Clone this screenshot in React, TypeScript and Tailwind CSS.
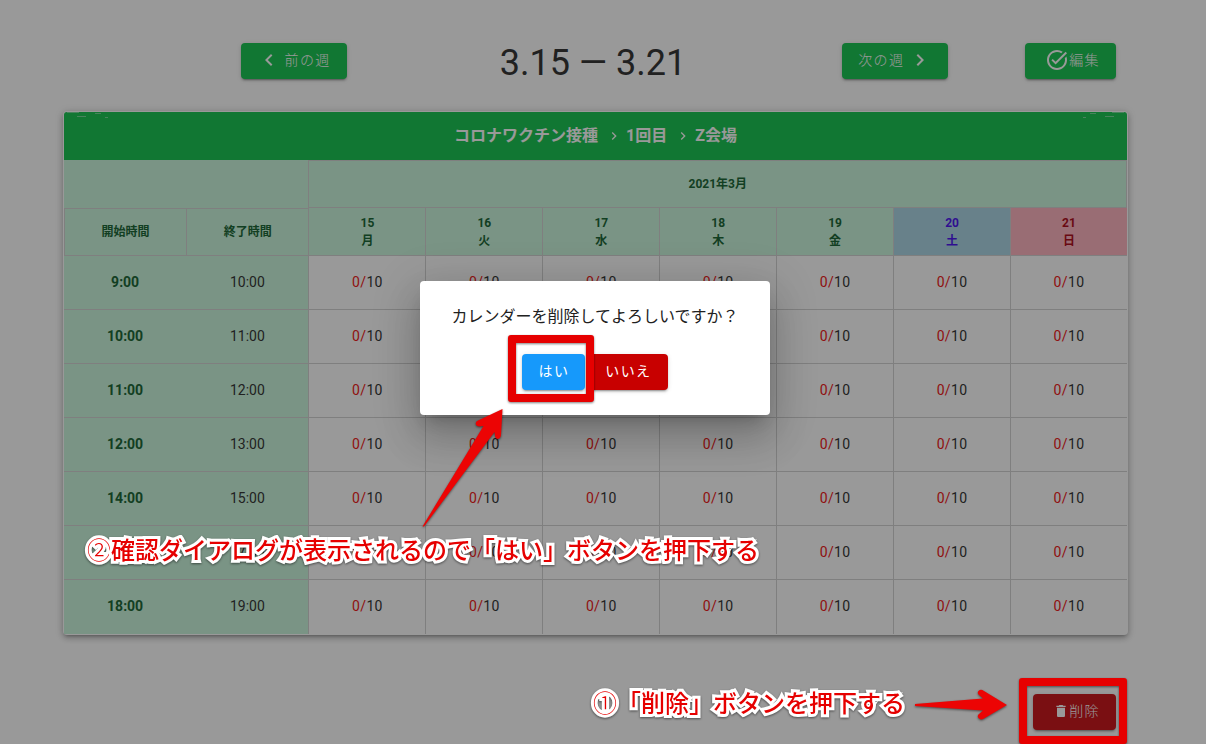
import type { ReactNode } from "react";
import { MdChevronLeft, MdChevronRight, MdDelete, MdTaskAlt } from "react-icons/md";

const days = [
  { date: 15, name: "月", tone: "bg-[#cbf7de] text-[#1e6939]" },
  { date: 16, name: "火", tone: "bg-[#cbf7de] text-[#1e6939]" },
  { date: 17, name: "水", tone: "bg-[#cbf7de] text-[#1e6939]" },
  { date: 18, name: "木", tone: "bg-[#cbf7de] text-[#1e6939]" },
  { date: 19, name: "金", tone: "bg-[#cbf7de] text-[#1e6939]" },
  { date: 20, name: "土", tone: "bg-[#add8e6] text-[#5018f0]" },
  { date: 21, name: "日", tone: "bg-[#ffb6c1] text-[#b01020]" },
];

const slots = [
  ["9:00", "10:00"],
  ["10:00", "11:00"],
  ["11:00", "12:00"],
  ["12:00", "13:00"],
  ["14:00", "15:00"],
  ["16:00", "17:00"],
  ["18:00", "19:00"],
];

function ActionButton({ tone, children }: { tone: string; children: ReactNode }) {
  return (
    <button
      type="button"
      className={`flex h-9 items-center rounded pb-0.5 text-sm tracking-widest whitespace-nowrap text-white shadow-[0_3px_1px_-2px_rgba(0,0,0,0.2),0_2px_2px_rgba(0,0,0,0.14),0_1px_5px_rgba(0,0,0,0.12)] ${tone}`}
    >
      {children}
    </button>
  );
}

function WeekNavigation() {
  return (
    <header className="grid grid-cols-[minmax(0,301fr)_minmax(0,297fr)_minmax(0,307fr)_minmax(0,67fr)] items-center justify-items-center pr-3 pl-20">
      <ActionButton tone="gap-1 bg-[#1dc655] px-4 font-light">
        <MdChevronLeft size={24} aria-hidden />
        前の週
      </ActionButton>
      <h1 className="h-8 text-4xl leading-9 whitespace-nowrap text-[#383838]">3.15 ― 3.21</h1>
      <ActionButton tone="gap-1 bg-[#1dc655] px-4 font-light">
        次の週
        <MdChevronRight size={24} aria-hidden />
      </ActionButton>
      <div className="justify-self-end">
        <ActionButton tone="bg-[#1dc655] pl-5 pr-4 font-light">
          <MdTaskAlt size={24} aria-hidden />
          編集
        </ActionButton>
      </div>
    </header>
  );
}

function Calendar() {
  return (
    <section className="mt-8 rounded bg-white p-px shadow-[0_3px_3px_-2px_rgba(0,0,0,0.2),0_3px_6px_rgba(0,0,0,0.2),0_1px_8px_rgba(0,0,0,0.16)]">
      <div className="relative flex h-12 items-center justify-center rounded-t-[3px] bg-[#1dc655] font-bold text-white">
        <svg className="absolute top-0 left-0" width="60" height="8" viewBox="0 0 60 8" stroke="white" strokeOpacity="0.4" aria-hidden>
          <path d="M3 0.5H15M13 4.5H22M31 1.5H37M41 5.5H44" />
        </svg>
        <svg className="absolute top-0 right-0" width="60" height="8" viewBox="0 0 60 8" stroke="white" strokeOpacity="0.4" aria-hidden>
          <path d="M57 0.5H45M47 4.5H38M29 1.5H23M19 5.5H16" />
        </svg>
        <h2 className="flex items-center">
          コロナワクチン接種
          <MdChevronRight size={16} className="mr-1 ml-2" aria-hidden />
          1回目
          <MdChevronRight size={16} className="mr-1 ml-2" aria-hidden />
          Z会場
        </h2>
      </div>
      <table className="w-full table-fixed border-separate border-spacing-0 text-center text-sm text-[#383838]">
        <colgroup>
          <col className="w-[11.5%]" />
          <col className="w-[11.5%]" />
          <col span={7} className="w-[11%]" />
        </colgroup>
        <thead className="text-xs text-[#1e6939]">
          <tr className="h-12">
            <td colSpan={2} className="bg-[#cbf7de]" />
            <th colSpan={7} className="border border-[#d4d4d4] bg-[#cbf7de]">
              2021年3月
            </th>
          </tr>
          <tr className="h-12">
            <th className="border border-r-0 border-[#d4d4d4] bg-[#cbf7de]">開始時間</th>
            <th className="border border-r-0 border-[#d4d4d4] bg-[#cbf7de]">終了時間</th>
            {days.map((day) => (
              <th key={day.date} className={`border-b border-l border-[#d4d4d4] p-0 leading-[18px] ${day.tone}`}>
                {day.date}
                <br />
                {day.name}
              </th>
            ))}
          </tr>
        </thead>
        <tbody className="[&>tr:last-child>*]:border-b-0">
          {slots.map(([start, end]) => (
            <tr key={start} className="h-[54px]">
              <th className="border-b border-[#d4d4d4] bg-[#cbf7de] p-0 pb-0.5 text-[#1e6939]">{start}</th>
              <td className="border-b border-[#d4d4d4] bg-[#cbf7de] p-0 pb-0.5">{end}</td>
              {days.map((day) => (
                <td key={day.date} className="border-b border-l border-[#d4d4d4] p-0 pb-0.5 tracking-wide">
                  <span className="text-[#f02020]">0/</span>10
                </td>
              ))}
            </tr>
          ))}
        </tbody>
      </table>
    </section>
  );
}

function ConfirmDialog() {
  return (
    <div className="absolute inset-0 flex items-start justify-center bg-black/40 pt-[281px] pr-4">
      <div
        role="dialog"
        aria-modal="true"
        aria-labelledby="confirm-title"
        className="flex w-[350px] flex-col items-center rounded bg-white pt-6 pb-[25px] shadow-[0_11px_15px_-7px_rgba(0,0,0,0.2),0_24px_38px_3px_rgba(0,0,0,0.14),0_9px_46px_8px_rgba(0,0,0,0.12)]"
      >
        <p id="confirm-title" className="leading-6 text-[#212121]">
          カレンダーを削除してよろしいですか？
        </p>
        <div className="mt-[25px] flex gap-1">
          <ActionButton tone="bg-[#1699fb] px-4">はい</ActionButton>
          <ActionButton tone="bg-[#c80000] px-4">いいえ</ActionButton>
        </div>
      </div>
    </div>
  );
}

function Note({ place, children }: { place: string; children: ReactNode }) {
  return (
    <p
      className={`absolute text-2xl leading-8 font-medium whitespace-nowrap text-[#e60000] [-webkit-text-stroke:6px_white] [paint-order:stroke_fill] [stroke-linejoin:round] drop-shadow-[0_1px_1px_rgba(0,0,0,0.5)] ${place}`}
    >
      {children}
    </p>
  );
}

function Annotations() {
  return (
    <div className="pointer-events-none absolute inset-0 overflow-hidden">
      <div className="absolute top-[335px] left-[508px] h-[67px] w-[86px] rounded-[3px] border-8 border-[#e60000] drop-shadow-[0_1px_1px_rgba(0,0,0,0.5)]" />
      <div className="absolute top-[678px] left-[1019px] h-[66px] w-[108px] rounded-[3px] border-8 border-[#e60000] drop-shadow-[0_1px_1px_rgba(0,0,0,0.5)]" />
      <svg className="absolute top-[404px] left-[418px] drop-shadow-[0_1px_1px_rgba(0,0,0,0.5)]" width="92" height="126" viewBox="418 404 92 126" aria-hidden>
        <path d="M422.5 526.5 L483.5 426 L479 426.5 Q475.5 426 475.7 423 Q476 421 478 420.5 L502.5 409 L501 435 Q500.5 439 497.5 439 Q495 438.5 495 436 L494.5 432 L424 526.5 Z" fill="#ec0404" />
      </svg>
      <svg className="absolute top-[685px] left-[910px] drop-shadow-[0_1px_1px_rgba(0,0,0,0.5)]" width="100" height="40" viewBox="910 685 100 40" aria-hidden>
        <path d="M915 704 L983 698.5 L979 695 Q976.5 692.5 979 690.5 Q981 689 984 691 L1007 705 L984 718.5 Q981 720.5 979 718.5 Q976.5 716 979 714 L983 710.5 L915 706 Z" fill="#ec0404" />
      </svg>
      <Note place="top-[535px] left-[87px]">
        <span className="font-light">②</span>確認ダイアログが表示されるので「はい」ボタンを押下する
      </Note>
      <Note place="top-[688px] left-[593px]">
        <span className="font-light">①</span>「削除」ボタンを押下する
      </Note>
    </div>
  );
}

export default function App() {
  return (
    <main lang="ja" className="relative bg-white pt-[43px] pr-[78px] pb-[14px] pl-[63px] font-['Roboto','Noto_Sans_CJK_JP',sans-serif]">
      <WeekNavigation />
      <Calendar />
      <footer className="mt-[59px] flex justify-end pr-3">
        <ActionButton tone="bg-[#cc1a1f] pl-5 pr-4 font-light">
          <MdDelete size={16} aria-hidden />
          削除
        </ActionButton>
      </footer>
      <ConfirmDialog />
      <Annotations />
    </main>
  );
}
